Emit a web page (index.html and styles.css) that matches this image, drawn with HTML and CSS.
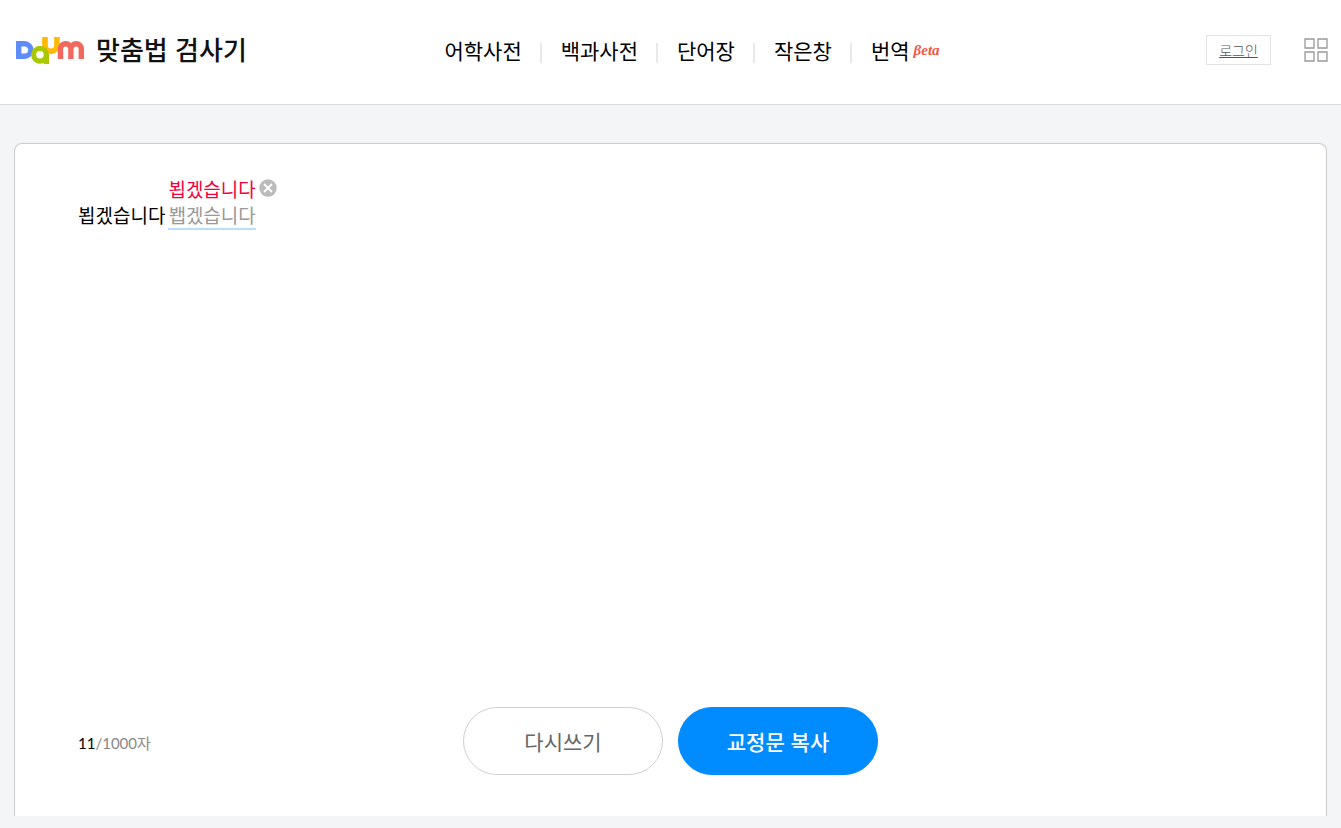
FILE: index.html
```html
<!DOCTYPE html>
<html lang="ko">
<head>
<meta charset="utf-8">
<title>Daum 맞춤법 검사기</title>
<link rel="stylesheet" href="styles.css">
</head>
<body>
<header class="header">
  <a class="brand" href="#">
    <svg class="logo" viewBox="0 0 69 28" width="69" height="28" role="img" aria-label="Daum">
      <path d="M3.700 7.700H9.500A6.300 6.300 0 0 1 9.500 20.300H3.700Z" fill="none" stroke="#5f8df8" stroke-width="5.400"/>
      <path d="M30 1V9.300A6 6 0 0 0 42 9.300V1" fill="none" stroke="#ffb900" stroke-width="5.600"/>
      <circle cx="25" cy="18.800" r="6.400" fill="none" stroke="#a9c800" stroke-width="5.200"/>
      <path d="M31.400 18V28" fill="none" stroke="#a9c800" stroke-width="5.200"/>
      <path d="M45.500 23V12.900A5.200 5.200 0 0 1 55.900 12.900V23M55.900 12.900A5.200 5.200 0 0 1 66.300 12.900V23" fill="none" stroke="#f1685e" stroke-width="5.400"/>
    </svg>
    <span class="service">맞춤법 검사기</span>
  </a>
  <nav class="nav">
    <a href="#">어학사전</a>
    <a href="#">백과사전</a>
    <a href="#">단어장</a>
    <a href="#">작은창</a>
    <a href="#">번역<em class="beta">βeta</em></a>
  </nav>
  <div class="tools">
    <a class="login" href="#">로그인</a>
    <button class="apps" type="button" aria-label="서비스 전체보기">
      <svg viewBox="0 0 24 24" width="24" height="24" fill="none" stroke="#999" stroke-width="1.300"><path d="M1 1h9v9H1zM14 1h9v9h-9zM1 14h9v9H1zM14 14h9v9h-9z"/></svg>
    </button>
  </div>
</header>
<main class="page">
  <section class="card">
    <div class="result">
      <span>뵙겠습니다</span>
      <span class="correction">
        <ins class="after">뵙겠습니다</ins>
        <button class="dismiss" type="button" aria-label="교정 취소">
          <svg viewBox="0 0 18 18" width="18" height="18"><circle cx="9" cy="9" r="8.700" fill="#bbb"/><path d="M5 5l8 8M13 5l-8 8" stroke="#fff" stroke-width="1.800"/></svg>
        </button>
        <del class="before">봽겠습니다</del>
      </span>
    </div>
    <footer class="footer">
      <p class="count"><span class="used">11</span>/1000자</p>
      <div class="actions">
        <button class="button" type="button">다시쓰기</button>
        <button class="button primary" type="button">교정문 복사</button>
      </div>
    </footer>
  </section>
</main>
</body>
</html>
```
FILE: styles.css
```css
* { box-sizing: border-box; }

body {
  display: flex;
  flex-direction: column;
  min-height: 100vh;
  margin: 0;
  background: #f3f5f7;
  color: #000;
  font-family: "Noto Sans CJK KR", sans-serif;
}

a { color: inherit; text-decoration: none; }
button { padding: 0; border: 0; background: none; font: inherit; cursor: pointer; }

.header {
  display: grid;
  grid-template-columns: 1fr auto 1fr;
  align-items: center;
  padding: 20px 13px 24px 15px;
  border-bottom: 1px solid #dadbdd;
  background: #fff;
}

.brand { display: flex; align-items: center; gap: 12px; }
.logo { display: block; }
.service { padding-bottom: 2px; font-size: 26px; line-height: 58px; font-weight: 500; color: #111; white-space: nowrap; }

.nav { display: flex; align-items: center; padding-left: 41px; font-size: 21px; line-height: 60px; white-space: nowrap; }
.nav a { display: flex; align-items: center; }
.nav a + a::before {
  width: 2px;
  height: 20px;
  margin: 6px 19px 0 18px;
  background: #e9e9e9;
  content: "";
}
.beta {
  margin-left: 4px;
  color: #f4553f;
  font: italic bold 15px/56px "Liberation Serif", serif;
}

.tools { display: flex; align-items: center; justify-content: flex-end; gap: 33px; }
.login {
  width: 65px;
  border: 1px solid #e4e4e4;
  color: #555;
  font-size: 14px;
  font-weight: 300;
  line-height: 28px;
  text-align: center;
  text-decoration: underline;
}
.apps { display: block; }
.apps svg, .dismiss svg { display: block; }

.page { display: flex; flex: 1; padding: 38px 14px 12px; }
.card {
  display: flex;
  flex: 1;
  flex-direction: column;
  justify-content: space-between;
  padding: 32px 63px 41px;
  border: 1px solid #cbccce;
  border-bottom: 0;
  border-radius: 8px 8px 0 0;
  background: #fff;
}

.result { display: flex; align-items: flex-end; gap: 3px; font-size: 19px; line-height: 26px; }
.result > span:first-child { padding-bottom: 2px; }
.correction { position: relative; display: flex; flex-direction: column; }
.after { color: #f5003d; text-decoration: none; }
.before { border-bottom: 2px solid #b9dffd; color: #999; text-decoration: none; }
.dismiss { position: absolute; top: 3px; left: 100%; margin-left: 3px; }

.footer { display: grid; grid-template-columns: 1fr auto 1fr; align-items: center; }
.count { margin: 4px 0 0; color: #888; font-family: Lato, "Noto Sans CJK KR", sans-serif; font-size: 15px; line-height: 24px; }
.used { color: #000; }
.actions { display: flex; gap: 15px; }
.button {
  width: 200px;
  height: 68px;
  border: 1px solid #d0d0d0;
  border-radius: 34px;
  background: #fff;
  color: #666;
  font-size: 21px;
}
.primary { border-color: #008bff; background: #008bff; color: #fff; font-weight: 500; }
```
